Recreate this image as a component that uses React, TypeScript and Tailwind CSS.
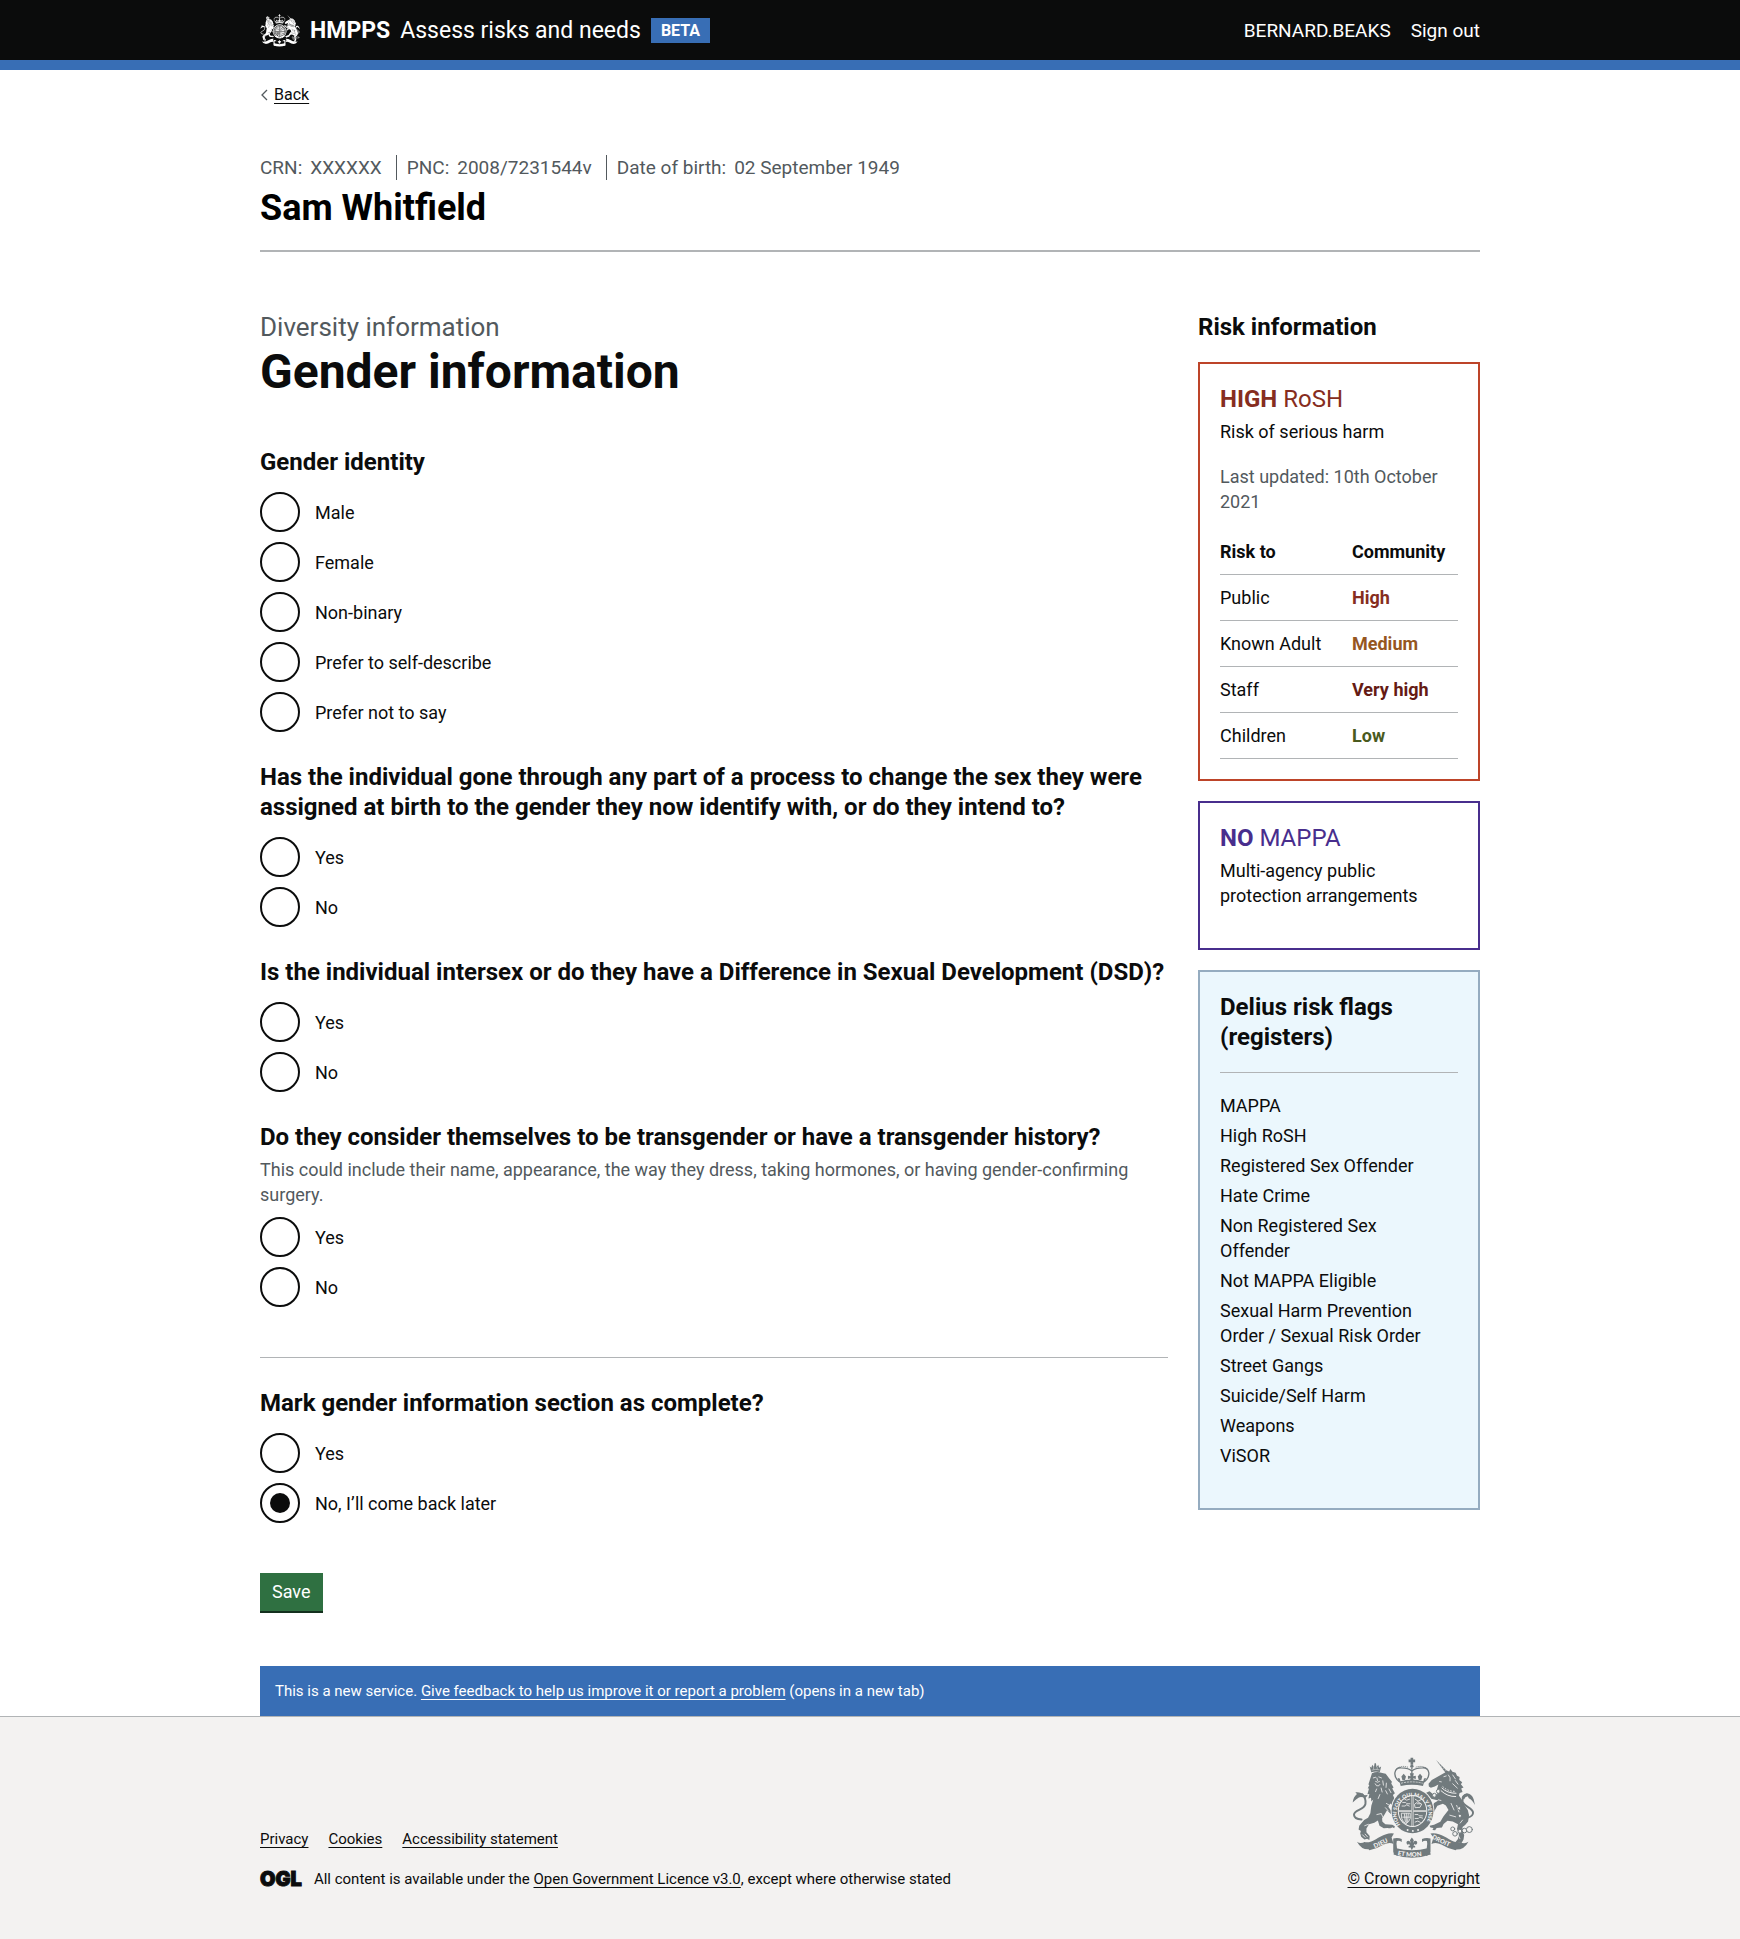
import React, { useState } from "react";

function Crest({ className, cut, motto }: { className: string; cut: string; motto?: boolean }) {
  const line = { fill: "none", stroke: "currentColor", strokeLinecap: "round" as const, strokeLinejoin: "round" as const };
  const gap = { fill: "none", stroke: cut, strokeLinecap: "round" as const, strokeLinejoin: "round" as const };
  return (
    <svg viewBox="34 48 380 312" className={className} fill="currentColor" aria-hidden="true">
      {/* centre crown */}
      <path d="M215 50h8v6h6v8h-6v8h-8v-8h-6v-8h6z" />
      <circle cx="219" cy="76" r="5" />
      <path {...line} strokeWidth="4" d="M181 124C158 106 166 80 186 81c16 0 28 4 33 10 5-6 17-10 33-10 20-1 28 25 5 43" />
      <path {...line} strokeWidth="3" strokeDasharray="1 5" d="M172 86c8-10 22-11 34-7M266 86c-8-10-22-11-34-7" />
      <path {...line} strokeWidth="4" strokeDasharray="3 3" d="M219 82v22" />
      <path d="M213 98h12l-2 9 8-2v10l-8-2 2 10h-12l2-10-8 2v-10l8 2zM187 108l7-9 7 9-3 10h-8zM237 108l7-9 7 9-3 10h-8zM176 112l6 2 3 12-7-3zM262 112l-6 2-3 12 7-3z" />
      <path d="M181 123q38-12 76 0l-4 14q-34-9-68 0z" />
      <path {...gap} strokeWidth="2" strokeDasharray="4 5" d="M187 128q32-8 64 0" />

      {/* lion */}
      <path d="M90 77l5 4 3-9 5 7 2-12h4l2 12 5-7 3 9 6-4-4 17q-14-4-26 1z" />
      <path {...gap} strokeWidth="1.5" d="M97 88q11-4 22-1M102 80v5M113 80v4" />
      <path d="M97 98q14-7 28-2l14 3 8 11 11 14-2 5 7 12-4 3 8 15-6 5 5 12 4 16-8-1 1 8-10-9-6 10 13 19 6 8 11 4-1 9-10 1-7-6-3-11-13-13-7 12-8 13 1 10 9 8 21 1 8 5-2 6-6-3-5 4-10-2-11 1-13-8-5-16-11 7-16 5-8 13 0 11 10 12-1 12-7-4-8 2-10-8-3-10 2-8-7-4 2-12 15-17 12-7 7-14 3-23 6-19-6 6-1-11-8 2 3-14-6 1 5-18-4 0 5-10-3-2z" />
      <path {...gap} strokeWidth="2.5" d="M101 112l7-2M118 109l8 3M108 123q6 5 12 0M112 112l2 8M107 130l4 6 7 0 3-4M130 121l2 13M141 128l-1 13M125 143l3 12M111 146l-3 8M139 151l5 10M149 146l6 11M121 163l-5 12" />
      <path {...gap} strokeWidth="2.5" d="M141 190l13 8M138 203l9 10M112 224l13-3M75 258l11-4M126 222q8 12 6 21M68 286l8 8M76 284l7 8M153 266l-2 5M160 267l-2 5" />
      <path {...line} strokeWidth="6" d="M65 239q-22-1-23-14c0-16 31-14 35-33 2-12-2-22-10-30" />
      <path d="M38 187q2-17 13-26l-5-5q17-2 28 9l10-1-6 9q-16-4-21-1-8 4-19 15z" />

      {/* unicorn */}
      <path d="M293 57l36 36-6 5z" />
      <path {...gap} strokeWidth="1.5" d="M302 70l4-3M308 77l4-3M314 84l4-4M320 90l4-4" />
      <path d="M322 95l4-6 7 3 4-7 6 8 10 3 4 9 8 4-1 9 9 7-4 6 8 10-7 3 4 11-9 3-2 8 10 14 8 17 9 13 4 16-3 19-9 11-8 6 0 11 5 14-2 13-6 11-8-2-4 5-9-3 10-12 3-16-6-15 3-14-16-9-16-2-12 10-5 11-16 1-5 7-8-1 3-6-9-1-3-6 14-3 19-9 10-17 15-19-8-14-9-5-17 6-9 16-6 16-7-5 0-14-7-9 6-6 8 4 5-10 13-8-22-5-13-13-9 9 6 13-6 9-11-9-6-16 5-3 11 2 8-11 10-4 12 10 12-1-1-16 4-14-11 6-12 4-6-4-1-8 10-12z" />
      <path {...gap} strokeWidth="2.5" d="M317 108l7-2M304 123l5 1M331 103q8 8 5 18M344 103l8 12M352 120l8 11M344 130l14 13" />
      <path {...gap} strokeWidth="3" d="M311 143q16 16 43 16M308 151q20 19 45 18" />
      <path {...gap} strokeWidth="3" strokeDasharray="2 7" d="M314 139q16 15 40 14" />
      <path {...gap} strokeWidth="2.5" d="M339 190l9 20M356 196l7 20M335 226l18 5M367 250l7-9M300 179l8 2M361 288l5 10" />
      <path {...line} strokeWidth="6" d="M388 234c12-3 19-10 18-17-2-14-30-18-32-34-1-11 6-19 14-20" />
      <path d="M371 174q2-11 14-14 17-1 23 17l4 18q-8-16-19-21l-3-6q-9 1-11 9z" />
      <g {...line} strokeWidth="3">
        <circle cx="300" cy="153" r="6" fill={cut} />
        <circle cx="288" cy="165" r="6" fill={cut} />
        <circle cx="364" cy="205" r="5" fill={cut} />
        <circle cx="366" cy="228" r="5" fill={cut} />
        <circle cx="344" cy="268" r="6" fill={cut} />
        <circle cx="351" cy="283" r="7" fill={cut} />
        <circle cx="366" cy="275" r="6" fill={cut} />
        <circle cx="380" cy="273" r="7" fill={cut} />
        <circle cx="395" cy="270" r="9" fill={cut} />
      </g>

      {/* garter and shield */}
      <ellipse cx="221" cy="213" rx="67" ry="71" fill={cut} />
      <ellipse cx="221" cy="213" rx="64" ry="68" />
      <ellipse cx="221" cy="213" rx="45" ry="49" fill={cut} />
      <ellipse cx="221" cy="213" rx="42" ry="46" />
      <path {...gap} strokeWidth="6" d="M221 168v90M180 213h83" />
      <path {...line} strokeWidth="2" d="M221 168v90M180 213h83" />
      <path {...gap} strokeWidth="2.5" d="M191 187h9l4 4h9M189 198h10l3-4 9 4M197 177l6 3 9-3M229 177l9 6 10-5M228 192l9-7 12 7-5 10-14 1zM235 191h10M229 224h9l4 4h9M229 236h10l4-4 9 3M229 247l8-3 8 4M188 220h26v16q-4 12-13 16-10-5-13-16zM196 222l3 24M202 221v29M208 222l-2 24M191 232h22" />
      {motto ? (
        <g fill={cut} fontFamily="Lato, sans-serif" fontWeight="900" fontSize="16">
          <path id="garter" fill="none" d="M184 256A49 53 0 1 1 258 256" />
          <text>
            <textPath href="#garter" startOffset="1">HONI SOIT QUI MAL Y PENSE</textPath>
          </text>
        </g>
      ) : (
        <path {...gap} strokeWidth="6" strokeDasharray="5 5" d="M180 251A53 58 0 1 1 262 251" />
      )}
      <circle cx="206" cy="271" r="3" fill={cut} />
      <circle cx="222" cy="274" r="3" fill={cut} />
      <circle cx="238" cy="271" r="3" fill={cut} />

      {/* ribbons */}
      <path d="M51 307q10 7 24 1l16 22q-25 4-40-23zM392 307q-10 8-26 2l-16 22q28 3 42-24z" />
      <path d="M72 308c24 6 42-16 68-24q12-4 24-2l-7 12 6 20q-14-7-30 2-22 14-44 17z" />
      <path d="M370 308c-24 6-42-16-68-24q-14-4-26-2l9 12-6 20q14-7 30 2 22 14 44 17z" />
      <path d="M162 297q14-4 26 2v9q-7-5-15-3l-1 8 4 38q-12-3-14-13zM276 297q-14-4-26 2v9q7-5 15-3l1 8-4 38q12-3 14-13z" />
      <path d="M168 326q51 15 102 0l7 20q-58 20-114 0z" />
      <path d="M219 294l6 9-3 9q5-11 12-6 4 6-3 11l-3-4-4 6 5 1v5h-6l-4 8-4-8h-6v-5l5-1-4-6-3 4q-7-5-3-11 7-5 12 6l-3-9z" />
      {motto && (
        <g fill={cut} fontFamily="Lato, sans-serif" fontWeight="900" fontSize="19">
          <path id="ribbon-left" fill="none" d="M106 327Q132 315 162 301" />
          <path id="ribbon-mid" fill="none" d="M175 348Q219 358 268 348" />
          <path id="ribbon-right" fill="none" d="M279 297Q312 315 352 330" />
          <text><textPath href="#ribbon-left">DIEU</textPath></text>
          <text><textPath href="#ribbon-mid">ET MON</textPath></text>
          <text><textPath href="#ribbon-right">DROIT</textPath></text>
        </g>
      )}
    </svg>
  );
}

function RadioGroup({ name, legend, hint, options, initial }: { name: string; legend: string; hint?: string; options: string[]; initial?: string }) {
  const [value, setValue] = useState(initial);
  return (
    <fieldset aria-describedby={hint ? `${name}-hint` : undefined}>
      <legend className="text-2xl leading-[30px] font-bold">{legend}</legend>
      {hint && (
        <p id={`${name}-hint`} className="mt-[5px] text-lg leading-[25px] text-[#52595d]">
          {hint}
        </p>
      )}
      <div className={hint ? "mt-2.5 flex flex-col gap-2.5" : "mt-[15px] flex flex-col gap-2.5"}>
        {options.map((o, i) => (
          <div key={o} className="flex items-center">
            <input
              type="radio"
              id={`${name}-${i}`}
              name={name}
              checked={value === o}
              onChange={() => setValue(o)}
              className="grid size-10 shrink-0 cursor-pointer appearance-none place-content-center rounded-full border-2 border-[#0b0c0c] bg-white before:size-5 before:rounded-full checked:before:bg-[#0b0c0c]"
            />
            <label htmlFor={`${name}-${i}`} className="cursor-pointer px-[15px] text-lg leading-[25px]">
              {o}
            </label>
          </div>
        ))}
      </div>
    </fieldset>
  );
}

const risks = [
  { who: "Public", level: "High", color: "text-[#862d20]" },
  { who: "Known Adult", level: "Medium", color: "text-[#96561f]" },
  { who: "Staff", level: "Very high", color: "text-[#651b14]" },
  { who: "Children", level: "Low", color: "text-[#4a5a1e]" },
];

const flags = [
  "MAPPA",
  "High RoSH",
  "Registered Sex Offender",
  "Hate Crime",
  "Non Registered Sex Offender",
  "Not MAPPA Eligible",
  "Sexual Harm Prevention Order / Sexual Risk Order",
  "Street Gangs",
  "Suicide/Self Harm",
  "Weapons",
  "ViSOR",
];

const footerLinks = ["Privacy", "Cookies", "Accessibility statement"];

export default function App() {
  return (
    <div className="min-h-screen bg-white font-['Roboto',sans-serif] text-lg leading-[25px] text-[#0b0c0c]">
      <header className="border-b-10 border-[#386eb5] bg-[#0b0c0c] text-white">
        <div className="mx-auto flex h-[60px] max-w-[1220px] items-center justify-between">
          <div className="flex items-center">
            <a href="#" className="flex items-center gap-2.5">
              <Crest className="h-[35px] w-10" cut="#0b0c0c" />
              <span className="text-[23px] font-bold">HMPPS</span>
            </a>
            <a href="#" className="ml-2.5 text-[23px]">
              Assess risks and needs
            </a>
            <strong className="ml-2.5 bg-[#386eb5] px-2.5 text-base leading-[25px] font-bold">BETA</strong>
          </div>
          <nav className="flex gap-5 text-[19px]" aria-label="Account">
            <span>BERNARD.BEAKS</span>
            <a href="#">Sign out</a>
          </nav>
        </div>
      </header>

      <div className="mx-auto max-w-[1220px]">
        <div className="flex items-center pt-[15px]">
          <svg viewBox="0 0 8 12" className="mr-1.5 h-3 w-2" fill="none" stroke="#52595d" strokeWidth="1.3" aria-hidden="true">
            <path d="M7 1 2 6l5 5" />
          </svg>
          <a href="#" className="text-base leading-5 underline underline-offset-3">
            Back
          </a>
        </div>

        <section className="mt-[50px] border-b-2 border-[#b1b4b6] pb-[22px]">
          <dl className="flex divide-x divide-[#52595d] text-[19px] text-[#52595d]">
            <div className="flex gap-2 pr-3.5">
              <dt>CRN:</dt>
              <dd>XXXXXX</dd>
            </div>
            <div className="flex gap-2 px-2.5 pr-3.5">
              <dt>PNC:</dt>
              <dd>2008/7231544v</dd>
            </div>
            <div className="flex gap-2 pl-2.5">
              <dt>Date of birth:</dt>
              <dd>02 September 1949</dd>
            </div>
          </dl>
          <p className="mt-2 text-4xl leading-10 font-bold text-black">Sam Whitfield</p>
        </section>

        <div className="mt-[60px] flex items-start gap-[30px]">
          <main className="min-w-0 flex-1">
            <h1 className="text-5xl leading-[50px] font-bold">
              <span className="mb-[5px] block text-[26px] leading-[30px] font-normal text-[#52595d]">Diversity information</span>
              Gender information
            </h1>
            <form className="mt-[50px]" onSubmit={(e) => e.preventDefault()}>
              <div className="flex flex-col gap-[30px]">
                <RadioGroup name="gender" legend="Gender identity" options={["Male", "Female", "Non-binary", "Prefer to self-describe", "Prefer not to say"]} />
                <RadioGroup
                  name="process"
                  legend="Has the individual gone through any part of a process to change the sex they were assigned at birth to the gender they now identify with, or do they intend to?"
                  options={["Yes", "No"]}
                />
                <RadioGroup name="dsd" legend="Is the individual intersex or do they have a Difference in Sexual Development (DSD)?" options={["Yes", "No"]} />
                <RadioGroup
                  name="transgender"
                  legend="Do they consider themselves to be transgender or have a transgender history?"
                  hint="This could include their name, appearance, the way they dress, taking hormones, or having gender-confirming surgery."
                  options={["Yes", "No"]}
                />
              </div>
              <hr className="mt-[50px] mb-[30px] border-[#b1b4b6]" />
              <RadioGroup name="complete" legend="Mark gender information section as complete?" options={["Yes", "No, I’ll come back later"]} initial="No, I’ll come back later" />
              <button type="submit" className="mt-[50px] mb-[53px] block cursor-pointer border-b-2 border-[#14301e] bg-[#2f7041] px-3 py-1.5 leading-[26px] text-white">
                Save
              </button>
            </form>
          </main>

          <aside className="w-[282px] shrink-0">
            <h2 className="mb-5 text-2xl leading-[30px] font-bold">Risk information</h2>
            <div className="flex flex-col gap-5">
              <section className="border-2 border-[#bd4429] p-5">
                <h3 className="text-2xl leading-[30px] text-[#862d20]">
                  <strong>HIGH</strong> RoSH
                </h3>
                <p className="mt-[5px]">Risk of serious harm</p>
                <p className="mt-5 text-[#52595d]">Last updated: 10th October 2021</p>
                <table className="mt-[15px] w-full border-separate border-spacing-0 text-left">
                  <thead>
                    <tr>
                      <th scope="col" className="border-b border-[#b1b4b6] py-2.5 font-bold">Risk to</th>
                      <th scope="col" className="w-[106px] border-b border-[#b1b4b6] py-2.5 font-bold">Community</th>
                    </tr>
                  </thead>
                  <tbody>
                    {risks.map((r) => (
                      <tr key={r.who}>
                        <td className="border-b border-[#b1b4b6] py-2.5">{r.who}</td>
                        <td className={`${r.color} border-b border-[#b1b4b6] py-2.5 font-bold`}>
                          <span>{r.level}</span>
                        </td>
                      </tr>
                    ))}
                  </tbody>
                </table>
              </section>

              <section className="border-2 border-[#482e8d] p-5">
                <h3 className="text-2xl leading-[30px] text-[#482e8d]">
                  <strong>NO</strong> MAPPA
                </h3>
                <p className="mt-[5px] mb-5">Multi-agency public protection arrangements</p>
              </section>

              <section className="border-2 border-[#95acc0] bg-[#ebf7fd] p-5">
                <h3 className="border-b border-[#b1b4b6] pb-5 text-2xl leading-[30px] font-bold">Delius risk flags (registers)</h3>
                <ul className="mt-5 mb-5 flex flex-col gap-[5px] pr-5">
                  {flags.map((f) => (
                    <li key={f}>{f}</li>
                  ))}
                </ul>
              </section>
            </div>
          </aside>
        </div>

        <p className="bg-[#386eb5] p-[15px] text-[15px] leading-5 text-white">
          This is a new service.{" "}
          <a href="#" className="underline underline-offset-3">
            Give feedback to help us improve it or report a problem
          </a>{" "}
          (opens in a new tab)
        </p>
      </div>

      <footer className="border-t border-[#b1b4b6] bg-[#f3f2f1] pt-10 pb-[50px] text-[15px] leading-5">
        <div className="mx-auto flex max-w-[1220px] items-end justify-between">
          <div>
            <ul className="mb-5 flex gap-5">
              {footerLinks.map((l) => (
                <li key={l}>
                  <a href="#" className="underline underline-offset-3">
                    {l}
                  </a>
                </li>
              ))}
            </ul>
            <div className="flex items-center gap-3">
              <span className="font-['Inter',sans-serif] text-xl leading-5 font-black [-webkit-text-stroke:1px]">OGL</span>
              <span>
                All content is available under the{" "}
                <a href="#" className="underline underline-offset-3">
                  Open Government Licence v3.0
                </a>
                , except where otherwise stated
              </span>
            </div>
          </div>
          <a href="#" className="flex flex-col items-center gap-2.5 text-base leading-5 underline underline-offset-3">
            <Crest className="h-[102px] w-[125px] text-[#717a7d]" cut="#f3f2f1" motto />
            © Crown copyright
          </a>
        </div>
      </footer>
    </div>
  );
}
